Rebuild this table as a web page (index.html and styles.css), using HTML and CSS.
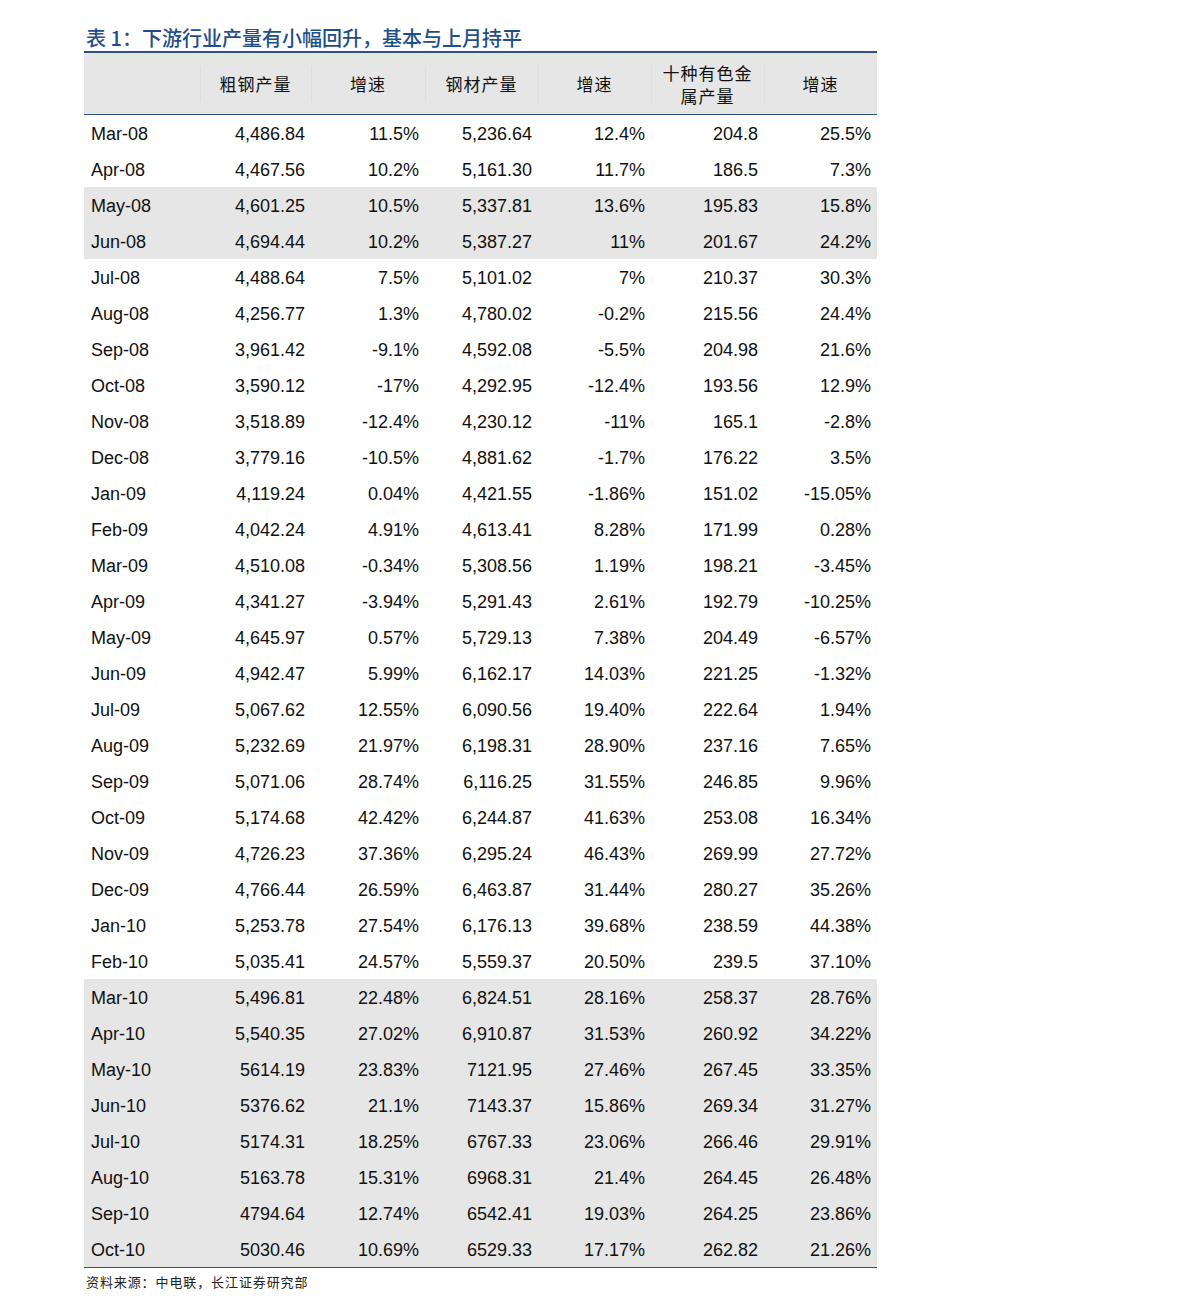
FILE: index.html
```html
<!DOCTYPE html>
<html lang="zh">
<head>
<meta charset="utf-8">
<title>表 1</title>
<link rel="stylesheet" href="styles.css">
</head>
<body>
<div class="page">
  <h1 class="title">表 1：下游行业产量有小幅回升，基本与上月持平</h1>
  <table class="data">
    <colgroup>
      <col class="c1"><col class="c2"><col class="c3"><col class="c4"><col class="c5"><col class="c6"><col class="c7">
    </colgroup>
    <thead>
      <tr>
        <th class="first"></th>
        <th>粗钢产量</th>
        <th>增速</th>
        <th>钢材产量</th>
        <th>增速</th>
        <th class="two">十种有色金<br>属产量</th>
        <th>增速</th>
      </tr>
    </thead>
    <tbody>
      <tr><td>Mar-08</td><td>4,486.84</td><td>11.5%</td><td>5,236.64</td><td>12.4%</td><td>204.8</td><td>25.5%</td></tr>
      <tr><td>Apr-08</td><td>4,467.56</td><td>10.2%</td><td>5,161.30</td><td>11.7%</td><td>186.5</td><td>7.3%</td></tr>
      <tr class="shade"><td>May-08</td><td>4,601.25</td><td>10.5%</td><td>5,337.81</td><td>13.6%</td><td>195.83</td><td>15.8%</td></tr>
      <tr class="shade"><td>Jun-08</td><td>4,694.44</td><td>10.2%</td><td>5,387.27</td><td>11%</td><td>201.67</td><td>24.2%</td></tr>
      <tr><td>Jul-08</td><td>4,488.64</td><td>7.5%</td><td>5,101.02</td><td>7%</td><td>210.37</td><td>30.3%</td></tr>
      <tr><td>Aug-08</td><td>4,256.77</td><td>1.3%</td><td>4,780.02</td><td>-0.2%</td><td>215.56</td><td>24.4%</td></tr>
      <tr><td>Sep-08</td><td>3,961.42</td><td>-9.1%</td><td>4,592.08</td><td>-5.5%</td><td>204.98</td><td>21.6%</td></tr>
      <tr><td>Oct-08</td><td>3,590.12</td><td>-17%</td><td>4,292.95</td><td>-12.4%</td><td>193.56</td><td>12.9%</td></tr>
      <tr><td>Nov-08</td><td>3,518.89</td><td>-12.4%</td><td>4,230.12</td><td>-11%</td><td>165.1</td><td>-2.8%</td></tr>
      <tr><td>Dec-08</td><td>3,779.16</td><td>-10.5%</td><td>4,881.62</td><td>-1.7%</td><td>176.22</td><td>3.5%</td></tr>
      <tr><td>Jan-09</td><td>4,119.24</td><td>0.04%</td><td>4,421.55</td><td>-1.86%</td><td>151.02</td><td>-15.05%</td></tr>
      <tr><td>Feb-09</td><td>4,042.24</td><td>4.91%</td><td>4,613.41</td><td>8.28%</td><td>171.99</td><td>0.28%</td></tr>
      <tr><td>Mar-09</td><td>4,510.08</td><td>-0.34%</td><td>5,308.56</td><td>1.19%</td><td>198.21</td><td>-3.45%</td></tr>
      <tr><td>Apr-09</td><td>4,341.27</td><td>-3.94%</td><td>5,291.43</td><td>2.61%</td><td>192.79</td><td>-10.25%</td></tr>
      <tr><td>May-09</td><td>4,645.97</td><td>0.57%</td><td>5,729.13</td><td>7.38%</td><td>204.49</td><td>-6.57%</td></tr>
      <tr><td>Jun-09</td><td>4,942.47</td><td>5.99%</td><td>6,162.17</td><td>14.03%</td><td>221.25</td><td>-1.32%</td></tr>
      <tr><td>Jul-09</td><td>5,067.62</td><td>12.55%</td><td>6,090.56</td><td>19.40%</td><td>222.64</td><td>1.94%</td></tr>
      <tr><td>Aug-09</td><td>5,232.69</td><td>21.97%</td><td>6,198.31</td><td>28.90%</td><td>237.16</td><td>7.65%</td></tr>
      <tr><td>Sep-09</td><td>5,071.06</td><td>28.74%</td><td>6,116.25</td><td>31.55%</td><td>246.85</td><td>9.96%</td></tr>
      <tr><td>Oct-09</td><td>5,174.68</td><td>42.42%</td><td>6,244.87</td><td>41.63%</td><td>253.08</td><td>16.34%</td></tr>
      <tr><td>Nov-09</td><td>4,726.23</td><td>37.36%</td><td>6,295.24</td><td>46.43%</td><td>269.99</td><td>27.72%</td></tr>
      <tr><td>Dec-09</td><td>4,766.44</td><td>26.59%</td><td>6,463.87</td><td>31.44%</td><td>280.27</td><td>35.26%</td></tr>
      <tr><td>Jan-10</td><td>5,253.78</td><td>27.54%</td><td>6,176.13</td><td>39.68%</td><td>238.59</td><td>44.38%</td></tr>
      <tr><td>Feb-10</td><td>5,035.41</td><td>24.57%</td><td>5,559.37</td><td>20.50%</td><td>239.5</td><td>37.10%</td></tr>
      <tr class="shade"><td>Mar-10</td><td>5,496.81</td><td>22.48%</td><td>6,824.51</td><td>28.16%</td><td>258.37</td><td>28.76%</td></tr>
      <tr class="shade"><td>Apr-10</td><td>5,540.35</td><td>27.02%</td><td>6,910.87</td><td>31.53%</td><td>260.92</td><td>34.22%</td></tr>
      <tr class="shade"><td>May-10</td><td>5614.19</td><td>23.83%</td><td>7121.95</td><td>27.46%</td><td>267.45</td><td>33.35%</td></tr>
      <tr class="shade"><td>Jun-10</td><td>5376.62</td><td>21.1%</td><td>7143.37</td><td>15.86%</td><td>269.34</td><td>31.27%</td></tr>
      <tr class="shade"><td>Jul-10</td><td>5174.31</td><td>18.25%</td><td>6767.33</td><td>23.06%</td><td>266.46</td><td>29.91%</td></tr>
      <tr class="shade"><td>Aug-10</td><td>5163.78</td><td>15.31%</td><td>6968.31</td><td>21.4%</td><td>264.45</td><td>26.48%</td></tr>
      <tr class="shade"><td>Sep-10</td><td>4794.64</td><td>12.74%</td><td>6542.41</td><td>19.03%</td><td>264.25</td><td>23.86%</td></tr>
      <tr class="shade"><td>Oct-10</td><td>5030.46</td><td>10.69%</td><td>6529.33</td><td>17.17%</td><td>262.82</td><td>21.26%</td></tr>
    </tbody>
  </table>
  <p class="source">资料来源：中电联，长江证券研究部</p>
</div>
</body>
</html>
```
FILE: styles.css
```css
html, body {
  margin: 0;
  padding: 0;
  background: #ffffff;
}

.page {
  padding: 26px 0 0 84px;
  width: 793px;
}

.title {
  margin: 0 0 1px 2px;
  font-family: "Noto Sans CJK SC", "Liberation Sans", sans-serif;
  font-size: 20px;
  line-height: 24px;
  font-weight: 500;
  color: #1f4f88;
  white-space: nowrap;
}

.data {
  width: 793px;
  border-collapse: collapse;
  table-layout: fixed;
  font-family: "Liberation Sans", Arial, sans-serif;
  font-size: 18px;
  color: #111111;
}

.c1 { width: 116px; }
.c2 { width: 111px; }
.c3 { width: 114px; }
.c4 { width: 113px; }
.c5 { width: 113px; }
.c6 { width: 113px; }
.c7 { width: 113px; }

.data thead tr {
  background-color: #e6e6e6;
  border-top: 2px solid #2c5283;
  border-bottom: 1px solid #2c5283;
}

.data th {
  height: 60px;
  padding: 0;
  font-family: "Noto Sans CJK SC", sans-serif;
  font-size: 17px;
  font-weight: 400;
  line-height: 23px;
  letter-spacing: 1px;
  text-align: center;
  vertical-align: middle;
  color: #111111;
  background-image: linear-gradient(#dedede, #dedede);
  background-size: 1px 36px;
  background-position: left center;
  background-repeat: no-repeat;
}

.data th.first {
  background-image: none;
}

.data th.two {
  padding-top: 1px;
}

.data td {
  height: 35px;
  padding: 1px 6px 0 0;
  text-align: right;
  vertical-align: middle;
  line-height: 20px;
  white-space: nowrap;
}

.data td:first-child {
  text-align: left;
  padding: 1px 0 0 7px;
}

.data tr.shade {
  background: #e6e6e6;
}

.data tbody tr:last-child {
  border-bottom: 1px solid #2c5283;
}

.source {
  margin: 5px 0 0 2px;
  font-family: "Noto Sans CJK SC", sans-serif;
  font-size: 13px;
  line-height: 18px;
  letter-spacing: 0.9px;
  color: #222222;
}
```
